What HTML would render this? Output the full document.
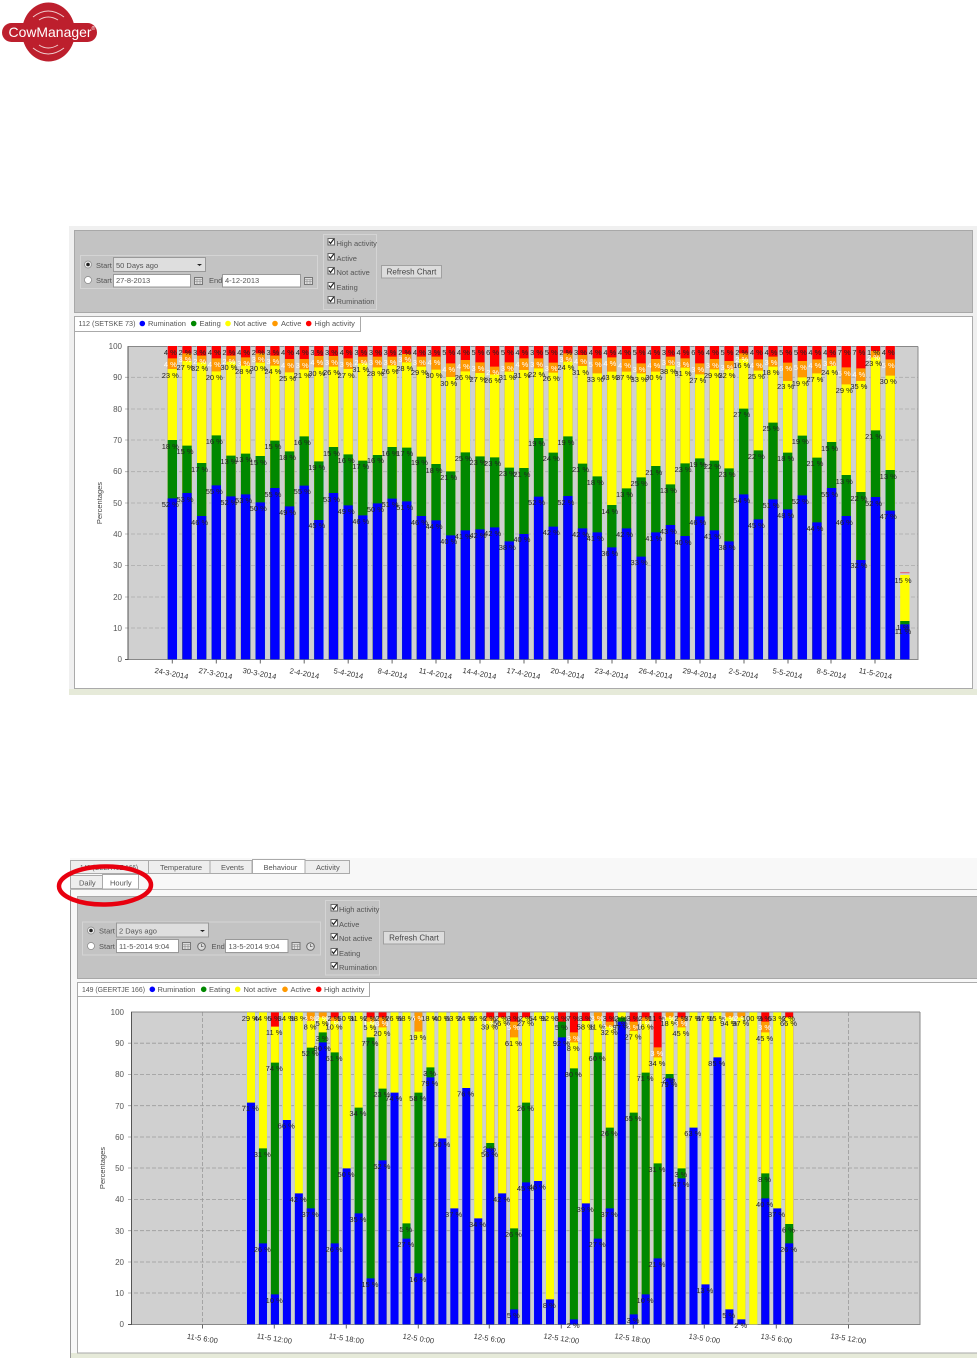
<!DOCTYPE html>
<html><head><meta charset="utf-8"><title>CowManager</title>
<style>
html,body{margin:0;padding:0;background:#fff}
svg{display:block;filter:blur(.3px)}
text{font-family:"Liberation Sans",sans-serif}
.u text,.u{font-size:7.5px;fill:#555}
.l text{font-size:7.5px;fill:#222;text-anchor:middle}
.l text.w{fill:#fff}
.a text{font-size:8px;fill:#555;text-anchor:end}
.x text{font-size:7.5px;fill:#333;text-anchor:middle}
.b{fill:none;stroke-linecap:butt}
</style></head><body>
<svg width="977" height="1358" viewBox="0 0 977 1358" xmlns="http://www.w3.org/2000/svg">
<defs>
<g id="cb"><rect x=".5" y=".5" width="6.5" height="6.5" fill="#fff" stroke="#666"/><path d="M1.5 3.5L3 5.5L6.3 1" fill="none" stroke="#222" stroke-width="1.2"/></g>
<g id="cal"><rect x=".5" y=".5" width="8" height="7" fill="#ddd" stroke="#777"/><path d="M.5 2.5H8.5M.5 4.5H8.5M3 2.5V7.5M6 2.5V7.5" stroke="#888" stroke-width=".6" fill="none"/></g>
<g id="clk"><circle cx="4.5" cy="4.5" r="3.8" fill="#ddd" stroke="#666"/><path d="M4.5 2V4.7H6.5" stroke="#555" stroke-width=".7" fill="none"/></g>
</defs>
<!-- logo -->
<ellipse cx="48.5" cy="32" rx="26.5" ry="29.5" fill="#bd1f2d"/>
<rect x="2" y="23" width="95" height="19" rx="9.5" fill="#bd1f2d"/>
<path d="M33 17Q48 5 64 17M39 20Q48 14 58 20M33 48Q48 60 64 48M39 45Q48 51 58 45" fill="none" stroke="#f0cfd0" stroke-width="1"/>
<text x="8.5" y="37" font-size="14" fill="#fff" textLength="83" lengthAdjust="spacingAndGlyphs">CowManager</text>
<text x="91.5" y="30" font-size="5" fill="#fff">®</text>

<!-- CHART 1 frame -->
<rect x="69" y="226" width="908" height="469" fill="#f0f0f0"/>
<rect x="69" y="689" width="908" height="6" fill="#e6ead9"/>
<rect x="74.5" y="230.5" width="898" height="82" fill="#c3c3c3" stroke="#a8a8a8"/>
<rect x="80.5" y="255.5" width="237" height="33" fill="none" stroke="#d4d4d4"/>
<circle cx="88" cy="264.5" r="3.5" fill="#eee" stroke="#888" stroke-width=".7"/><circle cx="88" cy="264.5" r="1.8" fill="#222"/>
<circle cx="88" cy="280" r="3.5" fill="#fff" stroke="#888" stroke-width=".7"/>
<g class="u"><text x="96" y="268">Start</text><text x="96" y="283">Start</text><text x="209" y="283">End</text></g>
<rect x="113.5" y="257.5" width="92" height="14" fill="#dedede" stroke="#999"/>
<path d="M197 264h5l-2.5 2z" fill="#222"/>
<rect x="113.5" y="274.5" width="77" height="12.5" fill="#fff" stroke="#999"/>
<rect x="222.5" y="274.5" width="78" height="12.5" fill="#fff" stroke="#999"/>
<g class="u"><text x="116" y="268">50 Days ago</text><text x="116" y="283">27-8-2013</text><text x="225" y="283">4-12-2013</text></g>
<use href="#cal" x="194" y="277"/><use href="#cal" x="304" y="277"/>
<rect x="323.5" y="234.5" width="53" height="75" fill="none" stroke="#d4d4d4"/>
<use href="#cb" x="327.5" y="238"/><use href="#cb" x="327.5" y="253"/><use href="#cb" x="327.5" y="267"/><use href="#cb" x="327.5" y="282"/><use href="#cb" x="327.5" y="296"/>
<g class="u"><text x="336.5" y="246">High activity</text><text x="336.5" y="261">Active</text><text x="336.5" y="275">Not active</text><text x="336.5" y="290">Eating</text><text x="336.5" y="304">Rumination</text></g>
<rect x="381.5" y="265.5" width="60" height="12.5" fill="#dcdcdc" stroke="#a0a0a0"/>
<text x="411.5" y="274.5" font-size="8" fill="#444" text-anchor="middle">Refresh Chart</text>
<rect x="74.5" y="316.5" width="898" height="372" fill="#fff" stroke="#aaa"/>
<path d="M75 331.5H360.5V316" fill="none" stroke="#aaa"/>
<g class="u"><text x="78.5" y="326" textLength="57" lengthAdjust="spacingAndGlyphs">112 (SETSKE 73)</text><text x="148" y="326">Rumination</text><text x="199.5" y="326">Eating</text><text x="233.5" y="326">Not active</text><text x="281" y="326">Active</text><text x="314.5" y="326">High activity</text></g>
<circle cx="142.3" cy="323.5" r="2.8" fill="#00f"/><circle cx="193.7" cy="323.5" r="2.8" fill="#080"/><circle cx="228" cy="323.5" r="2.8" fill="#ff0"/><circle cx="275" cy="323.5" r="2.8" fill="#f90"/><circle cx="308.7" cy="323.5" r="2.8" fill="#f00"/>
<!-- plot 1 -->
<rect x="128" y="346.5" width="790" height="313" fill="#d0d0d0"/>
<path d="M125 377.3H918M125 409H918M125 440H918M125 471.7H918M125 503H918M125 534H918M125 565.6H918M125 597H918M125 628H918" stroke="#aaa" stroke-width=".8" stroke-dasharray="4 2" fill="none"/>
<path d="M918 346.5H128V659.5H918V346.5" fill="none" stroke="#888"/>
<path d="M128 346.5V659.5H125" fill="none" stroke="#555"/>
<g class="a"><text x="122" y="349">100</text><text x="122" y="380">90</text><text x="122" y="412">80</text><text x="122" y="443">70</text><text x="122" y="474">60</text><text x="122" y="506">50</text><text x="122" y="537">40</text><text x="122" y="568">30</text><text x="122" y="600">20</text><text x="122" y="631">10</text><text x="122" y="662">0</text></g>
<text transform="translate(102 503) rotate(-90)" font-size="7.5" fill="#444" text-anchor="middle">Percentages</text>
<g transform="translate(172.35 340) scale(14.65 .33333)" class="b">
<path d="M-.35 488H49.65" stroke="#a6cfe6" stroke-width="940" stroke-dasharray=".7 .3"/>
<path d="M-.3175 488H49.68" stroke="#f00" stroke-width="940" stroke-dasharray=".635 .365"/>
<path stroke-width=".635" stroke="#f90" d="M0 55V958M1 40V958M2 47V958M3 55V958M4 47V958M5 52V958M6 40V958M7 47V958M8 57V958M9 57V958M10 48V958M11 48V958M12 55V958M13 50V958M14 50V958M15 50V958M16 42V958M17 50V958M18 50V958M19 70V958M20 60V958M21 67V958M22 80V958M23 67V958M24 55V958M25 55V958M26 68V958M27 40V958M28 45V958M29 55V958M30 52V958M31 57V958M32 70V958M33 57V958M34 50V958M35 55V958M36 70V958M37 57V958M38 63V958M39 40V958M40 58V958M41 50V958M42 68V958M43 63V958M44 58V958M45 52V958M46 82V958M47 85V958M48 33V958M49 58V958"/>
<path stroke-width=".635" stroke="#ff0" d="M0 87V958M1 63V958M2 67V958M3 94V958M4 65V958M5 77V958M6 68V958M7 77V958M8 97V958M9 88V958M10 82V958M11 80V958M12 87V958M13 70V958M14 82V958M15 76V958M16 67V958M17 80V958M18 89V958M19 111V958M20 94V958M21 99V958M22 103V958M23 95V958M24 90V958M25 85V958M26 98V958M27 65V958M28 78V958M29 100V958M30 95V958M31 95V958M32 100V958M33 95V958M34 77V958M35 83V958M36 103V958M37 88V958M38 88V958M39 57V958M40 92V958M41 80V958M42 123V958M43 112V958M44 100V958M45 78V958M46 133V958M47 123V958M48 52V958M49 107V958M50 705V958"/>
<path stroke-width=".635" stroke="#080" d="M0 300V958M1 317V958M2 369V958M3 286V958M4 347V958M5 341V958M6 348V958M7 302V958M8 334V958M9 289V958M10 364V958M11 321V958M12 343V958M13 362V958M14 345V958M15 321V958M16 323V958M17 350V958M18 372V958M19 394V958M20 337V958M21 349V958M22 352V958M23 383V958M24 384V958M25 294V958M26 338V958M27 289V958M28 371V958M29 409V958M30 495V958M31 445V958M32 412V958M33 378V958M34 433V958M35 370V958M36 355V958M37 362V958M38 385V958M39 206V958M40 331V958M41 248V958M42 338V958M43 287V958M44 353V958M45 306V958M46 405V958M47 456V958M48 271V958M49 390V958M50 843V958"/>
<path stroke-width=".635" stroke="#00f" d="M0 475V958M1 459V958M2 528V958M3 436V958M4 469V958M5 463V958M6 487V958M7 444V958M8 499V958M9 437V958M10 540V958M11 459V958M12 496V958M13 526V958M14 490V958M15 476V958M16 484V958M17 528V958M18 541V958M19 586V958M20 571V958M21 568V958M22 562V958M23 604V958M24 582V958M25 470V958M26 560V958M27 468V958M28 565V958M29 577V958M30 622V958M31 565V958M32 650V958M33 577V958M34 555V958M35 588V958M36 529V958M37 571V958M38 604V958M39 463V958M40 538V958M41 478V958M42 508V958M43 466V958M44 547V958M45 444V958M46 528V958M47 660V958M48 471V958M49 512V958M50 853V958"/>
<path stroke-width=".635" stroke="#e07080" d="M50 696V700"/>
</g>
<g class="l">
<g transform="translate(170.3)"><text y=355>4 %</text><text class=w y=367>4 %</text><text y=378>23 %</text><text y=449>18 %</text><text y=507>52 %</text></g>
<g transform="translate(185)"><text y=355>2 %</text><text class=w y=362>3 %</text><text y=370>27 %</text><text y=454>15 %</text><text y=502>53 %</text></g>
<g transform="translate(199.6)"><text y=355>3 %</text><text class=w y=364>2 %</text><text y=371>32 %</text><text y=472>17 %</text><text y=525>46 %</text></g>
<g transform="translate(214.3)"><text y=355>4 %</text><text class=w y=367>4 %</text><text y=380>20 %</text><text y=444>16 %</text><text y=494>55 %</text></g>
<g transform="translate(228.9)"><text y=355>2 %</text><text class=w y=364>2 %</text><text y=370>30 %</text><text y=464>13 %</text><text y=505>52 %</text></g>
<g transform="translate(243.6)"><text y=355>4 %</text><text class=w y=366>3 %</text><text y=374>28 %</text><text y=462>13 %</text><text y=503>53 %</text></g>
<g transform="translate(258.2)"><text y=355>2 %</text><text class=w y=362>3 %</text><text y=371>30 %</text><text y=465>15 %</text><text y=511>50 %</text></g>
<g transform="translate(272.9)"><text y=355>3 %</text><text class=w y=364>3 %</text><text y=374>24 %</text><text y=449>15 %</text><text y=497>55 %</text></g>
<g transform="translate(287.5)"><text y=355>4 %</text><text class=w y=368>4 %</text><text y=381>25 %</text><text y=460>18 %</text><text y=515>49 %</text></g>
<g transform="translate(302.2)"><text y=355>4 %</text><text class=w y=368>3 %</text><text y=378>21 %</text><text y=445>16 %</text><text y=494>55 %</text></g>
<g transform="translate(316.8)"><text y=355>3 %</text><text class=w y=365>4 %</text><text y=376>30 %</text><text y=470>19 %</text><text y=528>45 %</text></g>
<g transform="translate(331.5)"><text y=355>3 %</text><text class=w y=365>3 %</text><text y=375>26 %</text><text y=456>15 %</text><text y=502>53 %</text></g>
<g transform="translate(346.1)"><text y=355>4 %</text><text class=w y=367>3 %</text><text y=378>27 %</text><text y=463>16 %</text><text y=514>49 %</text></g>
<g transform="translate(360.8)"><text y=355>3 %</text><text class=w y=365>2 %</text><text y=372>31 %</text><text y=469>17 %</text><text y=524>46 %</text></g>
<g transform="translate(375.4)"><text y=355>3 %</text><text class=w y=365>3 %</text><text y=376>28 %</text><text y=463>16 %</text><text y=512>50 %</text></g>
<g transform="translate(390)"><text y=355>3 %</text><text class=w y=365>3 %</text><text y=374>26 %</text><text y=456>16 %</text><text y=507>51 %</text></g>
<g transform="translate(404.7)"><text y=355>2 %</text><text class=w y=362>3 %</text><text y=371>28 %</text><text y=456>17 %</text><text y=510>51 %</text></g>
<g transform="translate(419.4)"><text y=355>4 %</text><text class=w y=365>3 %</text><text y=375>29 %</text><text y=465>19 %</text><text y=525>46 %</text></g>
<g transform="translate(434)"><text y=355>3 %</text><text class=w y=365>4 %</text><text y=378>30 %</text><text y=473>18 %</text><text y=529>44 %</text></g>
<g transform="translate(448.7)"><text y=355>5 %</text><text class=w y=372>4 %</text><text y=386>30 %</text><text y=480>21 %</text><text y=544>40 %</text></g>
<g transform="translate(463.3)"><text y=355>4 %</text><text class=w y=369>4 %</text><text y=380>26 %</text><text y=461>25 %</text><text y=539>41 %</text></g>
<g transform="translate(478)"><text y=355>5 %</text><text class=w y=371>3 %</text><text y=382>27 %</text><text y=465>23 %</text><text y=538>42 %</text></g>
<g transform="translate(492.6)"><text y=355>6 %</text><text class=w y=375>2 %</text><text y=383>26 %</text><text y=466>23 %</text><text y=536>42 %</text></g>
<g transform="translate(507.3)"><text y=355>5 %</text><text class=w y=371>3 %</text><text y=380>31 %</text><text y=476>23 %</text><text y=550>38 %</text></g>
<g transform="translate(521.9)"><text y=355>4 %</text><text class=w y=367>4 %</text><text y=378>31 %</text><text y=477>21 %</text><text y=542>40 %</text></g>
<g transform="translate(536.6)"><text y=355>3 %</text><text class=w y=367>3 %</text><text y=377>22 %</text><text y=446>19 %</text><text y=505>52 %</text></g>
<g transform="translate(551.2)"><text y=355>5 %</text><text class=w y=371>3 %</text><text y=381>26 %</text><text y=461>24 %</text><text y=535>42 %</text></g>
<g transform="translate(565.9)"><text y=355>2 %</text><text class=w y=362>3 %</text><text y=370>24 %</text><text y=445>19 %</text><text y=505>52 %</text></g>
<g transform="translate(580.5)"><text y=355>3 %</text><text class=w y=364>4 %</text><text y=375>31 %</text><text y=472>21 %</text><text y=537>42 %</text></g>
<g transform="translate(595.2)"><text y=355>4 %</text><text class=w y=367>5 %</text><text y=382>33 %</text><text y=485>18 %</text><text y=541>41 %</text></g>
<g transform="translate(609.8)"><text y=355>4 %</text><text class=w y=366>4 %</text><text y=380>43 %</text><text y=514>14 %</text><text y=556>36 %</text></g>
<g transform="translate(624.5)"><text y=355>4 %</text><text class=w y=368>4 %</text><text y=380>37 %</text><text y=497>13 %</text><text y=537>42 %</text></g>
<g transform="translate(639.1)"><text y=355>5 %</text><text class=w y=372>3 %</text><text y=382>33 %</text><text y=486>25 %</text><text y=565>33 %</text></g>
<g transform="translate(653.8)"><text y=355>4 %</text><text class=w y=368>4 %</text><text y=380>30 %</text><text y=475>21 %</text><text y=541>41 %</text></g>
<g transform="translate(668.4)"><text y=355>3 %</text><text class=w y=365>3 %</text><text y=374>38 %</text><text y=493>13 %</text><text y=534>43 %</text></g>
<g transform="translate(683)"><text y=355>4 %</text><text class=w y=367>3 %</text><text y=376>31 %</text><text y=472>23 %</text><text y=545>40 %</text></g>
<g transform="translate(697.7)"><text y=355>6 %</text><text class=w y=372>3 %</text><text y=383>27 %</text><text y=467>19 %</text><text y=525>46 %</text></g>
<g transform="translate(712.4)"><text y=355>4 %</text><text class=w y=368>3 %</text><text y=378>29 %</text><text y=469>22 %</text><text y=539>41 %</text></g>
<g transform="translate(727)"><text y=355>5 %</text><text class=w y=370>3 %</text><text y=378>32 %</text><text y=477>23 %</text><text y=550>38 %</text></g>
<g transform="translate(741.7)"><text y=355>2 %</text><text class=w y=362>2 %</text><text y=368>16 %</text><text y=417>27 %</text><text y=503>54 %</text></g>
<g transform="translate(756.3)"><text y=355>4 %</text><text class=w y=368>4 %</text><text y=379>25 %</text><text y=459>22 %</text><text y=528>45 %</text></g>
<g transform="translate(771)"><text y=355>4 %</text><text class=w y=365>3 %</text><text y=375>18 %</text><text y=431>25 %</text><text y=508>51 %</text></g>
<g transform="translate(785.6)"><text y=355>5 %</text><text class=w y=371>6 %</text><text y=389>23 %</text><text y=461>18 %</text><text y=518>48 %</text></g>
<g transform="translate(800.3)"><text y=355>5 %</text><text class=w y=370>5 %</text><text y=386>19 %</text><text y=444>19 %</text><text y=504>52 %</text></g>
<g transform="translate(814.9)"><text y=355>4 %</text><text class=w y=368>4 %</text><text y=382>27 %</text><text y=466>21 %</text><text y=531>44 %</text></g>
<g transform="translate(829.6)"><text y=355>4 %</text><text class=w y=366>3 %</text><text y=375>24 %</text><text y=451>15 %</text><text y=497>55 %</text></g>
<g transform="translate(844.2)"><text y=355>7 %</text><text class=w y=376>5 %</text><text y=393>29 %</text><text y=484>13 %</text><text y=525>46 %</text></g>
<g transform="translate(858.9)"><text y=355>7 %</text><text class=w y=377>4 %</text><text y=389>35 %</text><text y=501>22 %</text><text y=568>32 %</text></g>
<g transform="translate(873.5)"><text y=355>1 %</text><text class=w y=360>2 %</text><text y=366>23 %</text><text y=439>21 %</text><text y=506>52 %</text></g>
<g transform="translate(888.2)"><text y=355>4 %</text><text class=w y=368>5 %</text><text y=384>30 %</text><text y=479>13 %</text><text y=519>47 %</text></g>
<g transform="translate(903)"><text y=583>15 %</text><text y=630>1 %</text><text y=634>11 %</text></g>
</g>
<g class="x">
<path d="M172.3 659.5v4M216.3 659.5v4M260.3 659.5v4M304.2 659.5v4M348.2 659.5v4M392.1 659.5v4M436 659.5v4M480 659.5v4M524 659.5v4M568 659.5v4M612 659.5v4M656 659.5v4M700 659.5v4M744 659.5v4M788 659.5v4M831 659.5v4M875 659.5v4" stroke="#666" fill="none"/>
<text transform="translate(171 676) rotate(11)">24-3-2014</text><text transform="translate(215 676) rotate(11)">27-3-2014</text><text transform="translate(259 676) rotate(11)">30-3-2014</text><text transform="translate(304 676) rotate(11)">2-4-2014</text><text transform="translate(348 676) rotate(11)">5-4-2014</text><text transform="translate(392 676) rotate(11)">8-4-2014</text><text transform="translate(435 676) rotate(11)">11-4-2014</text><text transform="translate(479 676) rotate(11)">14-4-2014</text><text transform="translate(523 676) rotate(11)">17-4-2014</text><text transform="translate(567 676) rotate(11)">20-4-2014</text><text transform="translate(611 676) rotate(11)">23-4-2014</text><text transform="translate(655 676) rotate(11)">26-4-2014</text><text transform="translate(699 676) rotate(11)">29-4-2014</text><text transform="translate(743 676) rotate(11)">2-5-2014</text><text transform="translate(787 676) rotate(11)">5-5-2014</text><text transform="translate(831 676) rotate(11)">8-5-2014</text><text transform="translate(875 676) rotate(11)">11-5-2014</text>
</g>

<!-- CHART 2 frame -->
<rect x="70" y="858" width="907" height="500" fill="#f8f8f8"/>
<rect x="70" y="1353" width="907" height="5" fill="#e6ead9"/>
<path d="M70.5 889V1358" stroke="#999"/>
<path d="M70 889.5H977" stroke="#bbb"/>
<g stroke="#aaa" fill="#eee">
<rect x="70.5" y="860.5" width="78" height="13"/>
<rect x="148.5" y="860.5" width="61.5" height="13"/>
<rect x="210" y="860.5" width="42" height="13"/>
<rect x="305" y="860.5" width="44.5" height="13"/>
<rect x="252.5" y="859.5" width="52.5" height="14" fill="#fff"/>
<rect x="70.5" y="875.5" width="32" height="13"/>
<rect x="102.5" y="874.5" width="36" height="14.5" fill="#fff"/>
</g>
<g class="u"><text x="80" y="870" textLength="58" lengthAdjust="spacingAndGlyphs">149 (GEERTJE 166)</text><text x="160" y="870">Temperature</text><text x="221" y="870">Events</text><text x="263.5" y="870">Behaviour</text><text x="316" y="870">Activity</text><text x="79" y="885.5">Daily</text><text x="110" y="885.5">Hourly</text></g>
<rect x="77.5" y="896.5" width="900" height="82" fill="#c3c3c3" stroke="#a8a8a8"/>
<rect x="82.5" y="922" width="238" height="33" fill="none" stroke="#d4d4d4"/>
<circle cx="91" cy="930.5" r="3.5" fill="#eee" stroke="#888" stroke-width=".7"/><circle cx="91" cy="930.5" r="1.8" fill="#222"/>
<circle cx="91" cy="946" r="3.5" fill="#fff" stroke="#888" stroke-width=".7"/>
<g class="u"><text x="99" y="933.5">Start</text><text x="99" y="949">Start</text><text x="211.5" y="949">End</text></g>
<rect x="116.5" y="923" width="92" height="14" fill="#dedede" stroke="#999"/>
<path d="M200 930h5l-2.5 2z" fill="#222"/>
<rect x="116.5" y="939.5" width="62" height="13" fill="#fff" stroke="#999"/>
<rect x="225.5" y="939.5" width="62.5" height="13" fill="#fff" stroke="#999"/>
<g class="u"><text x="119" y="933.5">2 Days ago</text><text x="119" y="949">11-5-2014 9:04</text><text x="228.5" y="949">13-5-2014 9:04</text></g>
<use href="#cal" x="182" y="942"/><use href="#clk" x="197" y="942"/><use href="#cal" x="291.5" y="942"/><use href="#clk" x="306" y="942"/>
<rect x="325.5" y="900.5" width="54" height="74.5" fill="none" stroke="#d4d4d4"/>
<use href="#cb" x="330.5" y="904"/><use href="#cb" x="330.5" y="919"/><use href="#cb" x="330.5" y="933"/><use href="#cb" x="330.5" y="948"/><use href="#cb" x="330.5" y="962"/>
<g class="u"><text x="339" y="912">High activity</text><text x="339" y="927">Active</text><text x="339" y="941">Not active</text><text x="339" y="956">Eating</text><text x="339" y="970">Rumination</text></g>
<rect x="383.5" y="931.5" width="61" height="12.5" fill="#dcdcdc" stroke="#a0a0a0"/>
<text x="414" y="940.5" font-size="8" fill="#444" text-anchor="middle">Refresh Chart</text>
<rect x="77.5" y="982.5" width="900" height="370.5" fill="#fff" stroke="#aaa"/>
<path d="M78 996.5H369.5V982" fill="none" stroke="#aaa"/>
<g class="u"><text x="82" y="992" textLength="63" lengthAdjust="spacingAndGlyphs">149 (GEERTJE 166)</text><text x="157.5" y="992">Rumination</text><text x="209" y="992">Eating</text><text x="243.5" y="992">Not active</text><text x="290.5" y="992">Active</text><text x="324" y="992">High activity</text></g>
<circle cx="152.3" cy="989.3" r="2.8" fill="#00f"/><circle cx="203.7" cy="989.3" r="2.8" fill="#080"/><circle cx="237.7" cy="989.3" r="2.8" fill="#ff0"/><circle cx="285" cy="989.3" r="2.8" fill="#f90"/><circle cx="318.7" cy="989.3" r="2.8" fill="#f00"/>
<!-- plot 2 -->
<rect x="131.5" y="1012" width="788.5" height="312.5" fill="#d0d0d0"/>
<path d="M128 1043.2H920M128 1074.5H920M128 1105.7H920M128 1137H920M128 1168H920M128 1199.5H920M128 1230.7H920M128 1262H920M128 1293H920M202.5 1012V1324M848.5 1012V1324" stroke="#9a9a9a" stroke-width=".8" stroke-dasharray="4 2" fill="none"/>
<path d="M920 1012H131.5V1324.5H920V1012" fill="none" stroke="#888"/>
<path d="M131.5 1012V1324.5H128" fill="none" stroke="#555"/>
<g class="a"><text x="124" y="1015">100</text><text x="124" y="1046">90</text><text x="124" y="1077">80</text><text x="124" y="1109">70</text><text x="124" y="1140">60</text><text x="124" y="1171">50</text><text x="124" y="1202">40</text><text x="124" y="1234">30</text><text x="124" y="1265">20</text><text x="124" y="1296">10</text><text x="124" y="1327">0</text></g>
<text transform="translate(105 1168) rotate(-90)" font-size="7.5" fill="#444" text-anchor="middle">Percentages</text>
<g transform="translate(251 1005) scale(11.96 .33333)" class="b">
<path d="M-.37 490H45.63" stroke="#a6cfe6" stroke-width="936" stroke-dasharray=".74 .26"/>
<path stroke-width=".67" stroke="#f00" d="M2 22V958M7 22V958M10 22V958M11 22V958M20 22V958M21 22V958M22 22V958M23 22V958M26 22V958M27 22V958M28 22V958M30 22V958M32 22V958M33 22V958M34 22V958M36 22V958M43 22V958M45 22V958"/>
<path stroke-width=".67" stroke="#f90" d="M5 22V958M6 22V958M7 37V958M10 37V958M11 37V958M14 22V958M20 37V958M22 50V958M27 82V958M29 22V958M30 50V958M32 50V958M33 37V958M34 127V958M35 22V958M36 37V958M40 22V958M41 22V958M43 50V958"/>
<path stroke-width=".67" stroke="#ff0" d="M0 22V958M1 22V958M2 65V958M3 22V958M4 22V958M5 48V958M6 37V958M7 48V958M8 22V958M9 22V958M10 50V958M11 67V958M12 22V958M13 22V958M14 80V958M15 22V958M16 22V958M17 22V958M18 22V958M19 22V958M20 48V958M21 37V958M22 97V958M23 37V958M24 22V958M25 22V958M27 112V958M28 48V958M29 47V958M30 65V958M31 22V958M32 78V958M33 48V958M34 157V958M35 37V958M36 67V958M37 22V958M38 22V958M39 22V958M40 37V958M41 37V958M42 22V958M43 82V958M44 22V958M45 37V958"/>
<path stroke-width=".67" stroke="#080" d="M1 430V958M2 173V958M5 128V958M6 82V958M7 142V958M9 308V958M10 97V958M11 251V958M13 655V958M14 263V958M15 187V958M20 414V958M22 670V958M23 293V958M26 50V958M27 190V958M29 142V958M30 368V958M31 37V958M32 323V958M33 203V958M34 475V958M35 207V958M36 490V958M43 505V958M45 657V958"/>
<path stroke-width=".67" stroke="#00f" d="M0 293V958M1 715V958M2 868V958M3 345V958M4 565V958M5 610V958M6 112V958M7 715V958M8 490V958M9 625V958M10 820V958M11 466V958M12 263V958M13 701V958M14 805V958M15 217V958M16 400V958M17 610V958M18 249V958M19 640V958M20 430V958M21 565V958M22 913V958M23 532V958M24 528V958M25 883V958M26 97V958M27 943V958M28 595V958M29 701V958M30 610V958M31 50V958M32 928V958M33 868V958M34 760V958M35 220V958M36 520V958M37 368V958M38 838V958M39 157V958M40 913V958M41 943V958M43 580V958M44 610V958M45 715V958"/>
</g>
<g class="l">
<g transform="translate(250.3)"><text y=1021>29 %</text><text y=1111>71 %</text></g>
<g transform="translate(262.3)"><text y=1021>44 %</text><text y=1157>31 %</text><text y=1252>26 %</text></g>
<g transform="translate(274.2)"><text y=1021>5 %</text><text y=1035>11 %</text><text y=1071>74 %</text><text y=1303>10 %</text></g>
<g transform="translate(286.2)"><text y=1021>34 %</text><text y=1128.5>66 %</text></g>
<g transform="translate(298.1)"><text y=1021>58 %</text><text y=1202>42 %</text></g>
<g transform="translate(310.1)"><text class=w y=1021>3 %</text><text y=1029.5>8 %</text><text y=1056>52 %</text><text y=1217>37 %</text></g>
<g transform="translate(322.1)"><text class=w y=1021>2 %</text><text y=1026>5 %</text><text y=1041>3 %</text><text y=1051>90 %</text></g>
<g transform="translate(334)"><text y=1021>2 %</text><text class=w y=1026>1 %</text><text y=1029.5>10 %</text><text y=1061>61 %</text><text y=1252>26 %</text></g>
<g transform="translate(346)"><text y=1021>50 %</text><text y=1177>50 %</text></g>
<g transform="translate(357.9)"><text y=1021>31 %</text><text y=1116>34 %</text><text y=1222>35 %</text></g>
<g transform="translate(369.9)"><text y=1021>2 %</text><text class=w y=1026>1 %</text><text y=1030>5 %</text><text y=1046>77 %</text><text y=1287>15 %</text></g>
<g transform="translate(381.9)"><text y=1021>2 %</text><text class=w y=1026>3 %</text><text y=1036>20 %</text><text y=1097>23 %</text><text y=1169>52 %</text></g>
<g transform="translate(393.8)"><text y=1021>26 %</text><text y=1101>74 %</text></g>
<g transform="translate(405.8)"><text y=1021>68 %</text><text y=1232>5 %</text><text y=1247>27 %</text></g>
<g transform="translate(417.7)"><text class=w y=1021>6 %</text><text y=1040>19 %</text><text y=1101>58 %</text><text y=1282>16 %</text></g>
<g transform="translate(429.7)"><text y=1021>18 %</text><text y=1076>3 %</text><text y=1086>79 %</text></g>
<g transform="translate(441.7)"><text y=1021>40 %</text><text y=1147>60 %</text></g>
<g transform="translate(453.6)"><text y=1021>63 %</text><text y=1217>37 %</text></g>
<g transform="translate(465.6)"><text y=1021>24 %</text><text y=1096.5>76 %</text></g>
<g transform="translate(477.5)"><text y=1021>66 %</text><text y=1227>34 %</text></g>
<g transform="translate(489.5)"><text y=1021>2 %</text><text class=w y=1026>1 %</text><text y=1029.5>39 %</text><text y=1151.5>2 %</text><text y=1157>56 %</text></g>
<g transform="translate(501.5)"><text y=1021>2 %</text><text y=1026>56 %</text><text y=1202>42 %</text></g>
<g transform="translate(513.4)"><text y=1021>3 %</text><text class=w y=1030>5 %</text><text y=1046>61 %</text><text y=1237>26 %</text><text y=1318>5 %</text></g>
<g transform="translate(525.4)"><text y=1021>2 %</text><text y=1026>27 %</text><text y=1111>26 %</text><text y=1191>45 %</text></g>
<g transform="translate(537.3)"><text y=1021>54 %</text><text y=1189.5>46 %</text></g>
<g transform="translate(549.3)"><text y=1021>92 %</text><text y=1308>8 %</text></g>
<g transform="translate(561.3)"><text y=1021>3 %</text><text y=1030>5 %</text><text y=1046>92 %</text></g>
<g transform="translate(573.2)"><text y=1021>7 %</text><text class=w y=1041>3 %</text><text y=1051>8 %</text><text y=1077>80 %</text><text y=1328>2 %</text></g>
<g transform="translate(585.2)"><text y=1021>3 %</text><text y=1029.5>58 %</text><text y=1212>39 %</text></g>
<g transform="translate(597.1)"><text class=w y=1021>3 %</text><text y=1029.5>11 %</text><text y=1061>60 %</text><text y=1247>27 %</text></g>
<g transform="translate(609.1)"><text y=1021>3 %</text><text class=w y=1030>2 %</text><text y=1035>32 %</text><text y=1136>26 %</text><text y=1217>37 %</text></g>
<g transform="translate(621.1)"><text y=1021>2 %</text><text y=1026>1 %</text><text y=1030>97 %</text></g>
<g transform="translate(633)"><text y=1021>3 %</text><text class=w y=1030>3 %</text><text y=1039.5>27 %</text><text y=1121>65 %</text><text y=1323>3 %</text></g>
<g transform="translate(645)"><text y=1021>2 %</text><text class=w y=1026>1 %</text><text y=1029.5>16 %</text><text y=1081>71 %</text><text y=1303>10 %</text></g>
<g transform="translate(656.9)"><text y=1021>11 %</text><text class=w y=1056>3 %</text><text y=1066>34 %</text><text y=1172>31 %</text><text y=1267>21 %</text></g>
<g transform="translate(668.9)"><text class=w y=1021>2 %</text><text y=1026>18 %</text><text y=1082.5>2 %</text><text y=1087>79 %</text></g>
<g transform="translate(680.9)"><text y=1021>2 %</text><text class=w y=1026>3 %</text><text y=1036>45 %</text><text y=1177>3 %</text><text y=1187>47 %</text></g>
<g transform="translate(692.8)"><text y=1021>37 %</text><text y=1136>63 %</text></g>
<g transform="translate(704.8)"><text y=1021>87 %</text><text y=1293>13 %</text></g>
<g transform="translate(716.7)"><text y=1021>15 %</text><text y=1066>85 %</text></g>
<g transform="translate(728.7)"><text class=w y=1021>2 %</text><text y=1026>94 %</text><text y=1318>5 %</text></g>
<g transform="translate(740.7)"><text class=w y=1021>2 %</text><text y=1026>97 %</text><text y=1328>2 %</text></g>
<g transform="translate(752.6)"><text y=1021>100 %</text></g>
<g transform="translate(764.6)"><text y=1021>3 %</text><text class=w y=1030>3 %</text><text y=1041>45 %</text><text y=1182>8 %</text><text y=1207>40 %</text></g>
<g transform="translate(776.5)"><text y=1021>63 %</text><text y=1217>37 %</text></g>
<g transform="translate(788.5)"><text y=1021>2 %</text><text y=1026>66 %</text><text y=1232.5>6 %</text><text y=1252>26 %</text></g>
</g>
<g class="x">
<path d="M202.5 1324.5v4M274.3 1324.5v4M346.3 1324.5v4M418.3 1324.5v4M489.3 1324.5v4M561.3 1324.5v4M633.3 1324.5v4M704.3 1324.5v4M776.3 1324.5v4M848.5 1324.5v4" stroke="#666" fill="none"/>
<text transform="translate(202 1341) rotate(9)">11-5 6:00</text><text transform="translate(274 1341) rotate(9)">11-5 12:00</text><text transform="translate(346 1341) rotate(9)">11-5 18:00</text><text transform="translate(418 1341) rotate(9)">12-5 0:00</text><text transform="translate(489 1341) rotate(9)">12-5 6:00</text><text transform="translate(561 1341) rotate(9)">12-5 12:00</text><text transform="translate(632 1341) rotate(9)">12-5 18:00</text><text transform="translate(704 1341) rotate(9)">13-5 0:00</text><text transform="translate(776 1341) rotate(9)">13-5 6:00</text><text transform="translate(848 1341) rotate(9)">13-5 12:00</text>
</g>
<!-- red annotation -->
<ellipse cx="105" cy="885.5" rx="46" ry="19" fill="none" stroke="#e8000f" stroke-width="4.5" transform="rotate(-1 105 885.5)"/>
</svg>
</body></html>
